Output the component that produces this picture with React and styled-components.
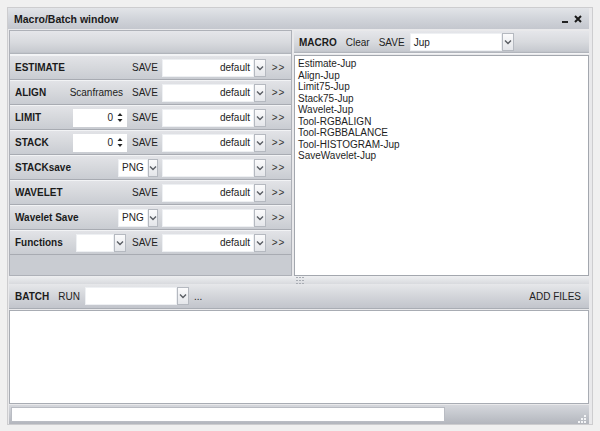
import React from 'react';
import styled, { createGlobalStyle } from 'styled-components';

const Global = createGlobalStyle`
  html, body { margin: 0; padding: 0; background: #f0f0f0; }
  body { font-family: "Liberation Sans", Arial, sans-serif; font-size: 10px; color: #1e1e1e; }
  * { box-sizing: border-box; }
`;

const Window = styled.div`
  margin: 7px 0 0 7px;
  width: 586px;
  height: 418px;
  border: 1px solid #cdcdcf;
  background: #e9e9eb;
  display: flex;
  flex-direction: column;
  padding: 0 3px 0 0;
`;

const TitleBar = styled.div`
  height: 21px;
  flex-shrink: 0;
  display: flex;
  align-items: center;
  padding: 0 6px 0 6px;
  background: linear-gradient(#e2e4e8 0%, #d0d3d9 55%, #c4c7ce 100%);
  font-weight: bold;
  font-size: 10.5px;
  color: #1a1a1a;
`;

const TitleText = styled.span`
  flex: 1;
  padding-top: 1px;
`;

const TitleButtons = styled.div`
  display: flex;
  align-items: center;
  gap: 5px;
  margin-right: 1px;
`;

const Content = styled.div`
  flex: 1;
  display: flex;
  flex-direction: column;
  padding: 1px 0 0 1px;
  & > * { flex-shrink: 0; }
`;

const Top = styled.div`
  height: 246px;
  display: flex;
`;

const LeftPanel = styled.div`
  width: 283px;
  border: 1px solid #aeb1b8;
  background: #c9ccd2;
  display: flex;
  flex-direction: column;
  & > * { flex-shrink: 0; }
`;

const PanelHeader = styled.div`
  height: ${p => p.$h || 24}px;
  flex-shrink: 0;
  display: flex;
  align-items: center;
  gap: ${p => p.$gap || 0}px;
  padding-left: ${p => p.$pl || 0}px;
  border-bottom: 1px solid #f4f5f7;
  background: linear-gradient(#e5e6ea 0%, #d8dade 50%, #c6c9cf 92%, #a9adb4 100%);
`;

const Row = styled.div`
  height: 25px;
  display: flex;
  align-items: center;
  padding-left: 5px;
  border-top: 1px solid #f2f3f5;
  border-bottom: 1px solid #a8abb2;
  background: linear-gradient(#e2e3e7 0%, #d7d9dd 45%, #c9ccd2 100%);
`;

const Label = styled.span`
  font-weight: bold;
  font-size: 10px;
  color: #1b1b1b;
  margin-right: ${p => (p.$mr !== undefined ? p.$mr + 'px' : 'auto')};
`;

const Text = styled.span`
  font-size: 10px;
  color: #222;
  margin-right: ${p => p.$mr || 0}px;
  width: ${p => (p.$w ? p.$w + 'px' : 'auto')};
`;

const ComboWrap = styled.div`
  display: flex;
  height: 18px;
  width: ${p => p.$w}px;
  margin-right: ${p => p.$mr || 0}px;
`;

const ComboField = styled.div`
  flex: 1;
  background: #fff;
  border: 1px solid #eef0f3;
  display: flex;
  align-items: center;
  justify-content: ${p => (p.$right ? 'flex-end' : 'flex-start')};
  padding: 0 3px 0 3px;
  font-size: 10px;
  color: #222;
`;

const ComboButton = styled.div`
  width: 12px;
  background: linear-gradient(#fbfbfc, #e4e6ea);
  border: 1px solid #b5b9c0;
  display: flex;
  align-items: center;
  justify-content: center;
`;

const SpinWrap = styled.div`
  width: 54px;
  height: 18px;
  background: #fff;
  display: flex;
  align-items: center;
  justify-content: flex-end;
  padding-right: 4px;
  gap: 4px;
  margin-right: 5px;
  font-size: 10px;
`;

const Arrow = styled.span`
  width: 25px;
  text-align: center;
  font-size: 10px;
  color: #333;
  letter-spacing: 1px;
`;

const VSplit = styled.div`
  width: 2px;
`;

const RightPanel = styled.div`
  flex: 1;
  display: flex;
  flex-direction: column;
  padding-top: 1px;
`;

const MacroList = styled.div`
  flex: 1;
  margin-top: 1px;
  background: #fff;
  border: 1px solid #a3a7ae;
  padding: 2px 3px;
  font-size: 10px;
  line-height: 11.5px;
  color: #1e1e1e;
`;

const HSplit = styled.div`
  height: 8px;
  display: flex;
  align-items: center;
  padding-left: 287px;
  background: linear-gradient(#eeeff1, #d8dade);
`;

const BatchBar = styled.div`
  height: 25px;
  display: flex;
  align-items: center;
  padding: 0 8px 0 6px;
  background: linear-gradient(#e6e7ea 0%, #d3d5da 50%, #c2c5cc 100%);
  border-bottom: 1px solid #a9adb4;
`;

const Spacer = styled.div`
  flex: 1;
`;

const BatchList = styled.div`
  height: 94px;
  margin-top: 1px;
  background: #fff;
  border: 1px solid #a8acb3;
`;

const StatusBar = styled.div`
  height: 19px;
  margin-top: 1px;
  display: flex;
  align-items: center;
  padding: 0 3px 0 2px;
  background: linear-gradient(#d5d7dc 0%, #c4c7cd 50%, #b3b6bd 100%);
`;

const Progress = styled.div`
  width: 434px;
  height: 15px;
  background: #fff;
  border: 1px solid #b9bcc3;
`;

const ResizeGrip = styled.svg`
  margin-left: auto;
  align-self: flex-end;
  margin-bottom: 1px;
`;

const Chevron = () => (
  <svg width="8" height="6" viewBox="0 0 8 6">
    <polyline points="1,1.5 4,4.5 7,1.5" fill="none" stroke="#5a5d63" strokeWidth="1.4" />
  </svg>
);

const Combo = ({ w, value, right, mr }) => (
  <ComboWrap $w={w} $mr={mr}>
    <ComboField $right={right}>{value}</ComboField>
    <ComboButton><Chevron /></ComboButton>
  </ComboWrap>
);

const Spin = () => (
  <SpinWrap>
    <span>0</span>
    <svg width="6" height="11" viewBox="0 0 6 11">
      <polygon points="3,1 5.5,4 0.5,4" fill="#222" />
      <polygon points="3,10 5.5,7 0.5,7" fill="#222" />
    </svg>
  </SpinWrap>
);

const Grip = () => (
  <svg width="8" height="7" viewBox="0 0 8 7">
    {[0, 3, 6].map(x => [0, 3, 6].map(y => (
      <rect key={x + '-' + y} x={x} y={y} width="2" height="1" fill="#a8acb3" />
    )))}
  </svg>
);

const rows = [
  { label: 'ESTIMATE', save: true },
  { label: 'ALIGN', mid: 'scan', save: true },
  { label: 'LIMIT', mid: 'spin', save: true },
  { label: 'STACK', mid: 'spin', save: true },
  { label: 'STACKsave', png: true },
  { label: 'WAVELET', save: true },
  { label: 'Wavelet Save', png: true },
  { label: 'Functions', mid: 'combo', save: true },
];

const macros = [
  'Estimate-Jup', 'Align-Jup', 'Limit75-Jup', 'Stack75-Jup', 'Wavelet-Jup',
  'Tool-RGBALIGN', 'Tool-RGBBALANCE', 'Tool-HISTOGRAM-Jup', 'SaveWavelet-Jup',
];

export default function App() {
  return (
    <>
      <Global />
      <Window>
        <TitleBar>
          <TitleText>Macro/Batch window</TitleText>
          <TitleButtons>
            <svg width="7" height="8" viewBox="0 0 7 8"><rect x="0" y="6" width="6" height="2" fill="#222" /></svg>
            <svg width="8" height="8" viewBox="0 0 8 8">
              <path d="M1 1 L7 7 M7 1 L1 7" stroke="#1a1a1a" strokeWidth="2" />
            </svg>
          </TitleButtons>
        </TitleBar>
        <Content>
          <Top>
            <LeftPanel>
              <PanelHeader $h={24} />
              {rows.map(r => (
                <Row key={r.label}>
                  <Label>{r.label}</Label>
                  {r.mid === 'scan' && <Text $mr={9}>Scanframes</Text>}
                  {r.mid === 'spin' && <Spin />}
                  {r.mid === 'combo' && <Combo w={50} value="" mr={6} />}
                  {r.png && <Combo w={40} value="PNG" mr={4} />}
                  {r.save && <Text $w={30}>SAVE</Text>}
                  <Combo w={104} value={r.png ? '' : 'default'} right />
                  <Arrow>&gt;&gt;</Arrow>
                </Row>
              ))}
            </LeftPanel>
            <VSplit />
            <RightPanel>
              <PanelHeader $h={23} $pl={5} $gap={9}>
                <Label $mr={0}>MACRO</Label>
                <Text>Clear</Text>
                <Text $mr={-4}>SAVE</Text>
                <Combo w={104} value="Jup" />
              </PanelHeader>
              <MacroList>
                {macros.map(m => <div key={m}>{m}</div>)}
              </MacroList>
            </RightPanel>
          </Top>
          <HSplit><Grip /></HSplit>
          <BatchBar>
            <Label $mr={9}>BATCH</Label>
            <Text $mr={5}>RUN</Text>
            <Combo w={104} value="" mr={5} />
            <Text>...</Text>
            <Spacer />
            <Text>ADD FILES</Text>
          </BatchBar>
          <BatchList />
          <StatusBar>
            <Progress />
            <ResizeGrip width="8" height="8" viewBox="0 0 8 8">
              <rect x="6" y="0" width="2" height="2" fill="#f4f5f7" />
              <rect x="3" y="3" width="2" height="2" fill="#f4f5f7" />
              <rect x="6" y="3" width="2" height="2" fill="#f4f5f7" />
              <rect x="0" y="6" width="2" height="2" fill="#f4f5f7" />
              <rect x="3" y="6" width="2" height="2" fill="#f4f5f7" />
              <rect x="6" y="6" width="2" height="2" fill="#f4f5f7" />
            </ResizeGrip>
          </StatusBar>
        </Content>
      </Window>
    </>
  );
}
